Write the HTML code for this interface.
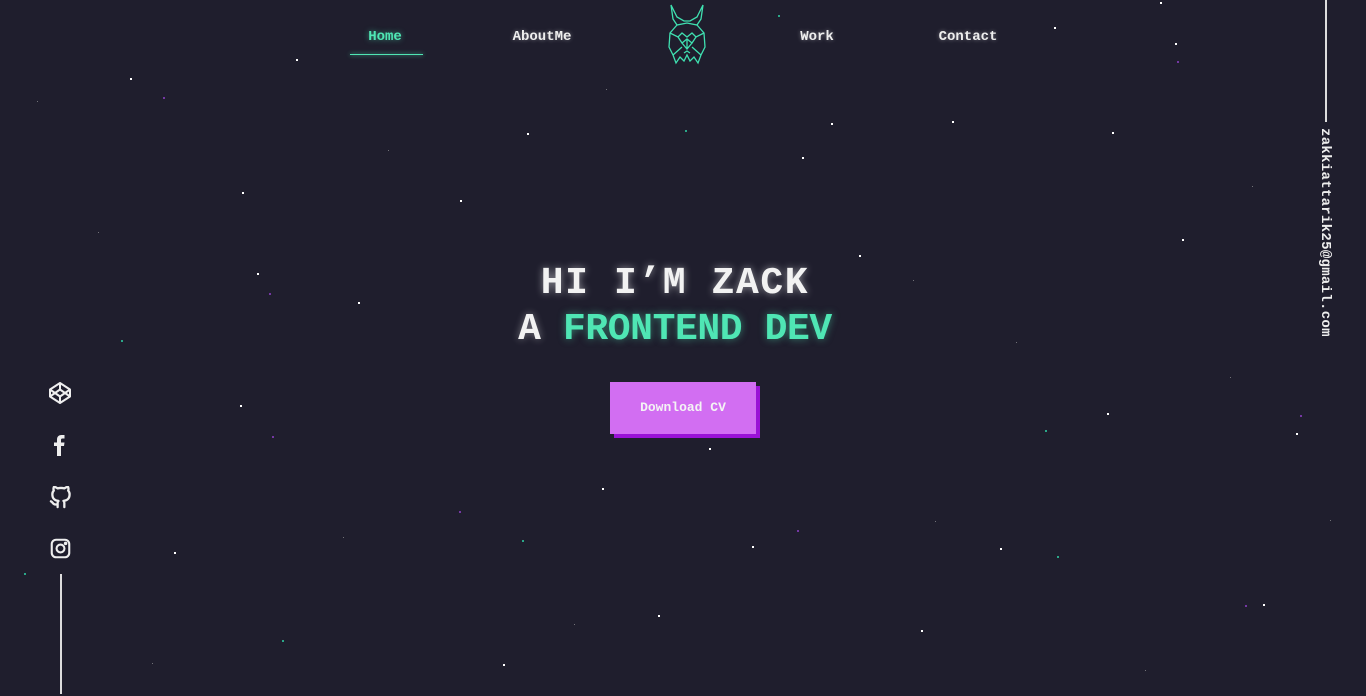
<!DOCTYPE html>
<html><head><meta charset="utf-8"><style>
html,body{margin:0;padding:0;width:1366px;height:696px;overflow:hidden;background:#1f1e2d;font-family:"Liberation Mono",monospace;}
.s{position:absolute;width:2px;height:2px;background:#fff;}
.p{position:absolute;width:2px;height:2px;background:#8a3fc0;opacity:.8}
.t{position:absolute;width:2px;height:2px;background:#2ec9a0;opacity:.8}
.d{position:absolute;width:1px;height:1px;background:#aaa;opacity:.6}
.nav{position:absolute;top:29px;font-size:14px;font-weight:bold;color:#eee;text-shadow:0 0 4px rgba(255,255,255,.4);transform:translateX(-50%);}
.h{position:absolute;left:-8px;width:1366px;text-align:center;font-weight:bold;}
</style></head><body>
<div class="nav" style="left:385px;color:#4fe6b4;text-shadow:0 0 6px rgba(79,230,180,.6)">Home</div>
<div style="position:absolute;left:350px;top:54px;width:73px;height:1px;background:#4fe6b4;box-shadow:0 0 4px #4fe6b4"></div>
<div class="nav" style="left:542px">AboutMe</div>
<div class="nav" style="left:817px">Work</div>
<div class="nav" style="left:968px">Contact</div>
<svg style="position:absolute;left:664px;top:3px" width="46" height="62" viewBox="0 0 46 62" fill="none" stroke="#3fe0b0" stroke-width="1.3">
<path d="M7 2 L9 16 L13 22 L23 20 L33 22 L37 16 L39 2 L33 14 L26 18 L20 18 L13 14 Z"/>
<path d="M13 22 L6 30 L5 44 L9 52 L12 60 L16 54 L20 58 L23 52 L26 58 L30 54 L34 60 L37 52 L41 44 L40 30 L33 22"/>
<path d="M6 30 L14 34 L18 30 L23 34 L28 30 L32 34 L40 30 M14 34 L18 40 L23 36 L28 40 L32 34 M18 40 L23 46 L28 40 M23 36 L23 46 M9 52 L18 44 M37 52 L28 44 M20 50 L23 48 L26 50"/>
</svg>
<div class="h" style="top:262px;font-size:38px;letter-spacing:1.6px;color:#f2f2f2;text-shadow:0 0 8px rgba(255,255,255,.5)">HI I’M ZACK</div>
<div class="h" style="top:308px;font-size:38px;letter-spacing:-0.4px;color:#f2f2f2;text-shadow:0 0 8px rgba(255,255,255,.4)">A <span style="color:#4fe6b4;text-shadow:0 0 8px rgba(79,230,180,.5)">FRONTEND DEV</span></div>
<div style="position:absolute;left:614px;top:386px;width:146px;height:52px;background:#9a12d6"></div>
<div style="position:absolute;left:610px;top:382px;width:146px;height:52px;background:#d26ef2;color:#f4f4f4;font-size:13px;font-weight:bold;line-height:52px;text-align:center">Download CV</div>
<div style="position:absolute;left:1325px;top:0;width:2px;height:122px;background:#ddd"></div>
<div style="position:absolute;left:1317px;top:128px;writing-mode:vertical-rl;font-size:14px;font-weight:bold;color:#eee;letter-spacing:.3px">zakkiattarik25@gmail.com</div>
<div style="position:absolute;left:60px;top:574px;width:2px;height:120px;background:#ddd"></div>
<svg style="position:absolute;left:48px;top:381px" width="24" height="24" viewBox="0 0 24 24" fill="none" stroke="#eee" stroke-width="2" stroke-linejoin="round"><path d="M12 2 L22 8.5 V15.5 L12 22 L2 15.5 V8.5 Z M12 22 V15.5 M22 8.5 L12 15.5 L2 8.5 M2 15.5 L12 8.5 L22 15.5 M12 2 V8.5"/></svg>
<svg style="position:absolute;left:52px;top:434px" width="16" height="22" viewBox="0 0 16 22" fill="#eee"><path d="M5 22 V12 H2 V8.5 H5 V5.5 C5 2.5 7 1 9.5 1 H12.5 V4.5 H10.5 C9.3 4.5 9 5 9 6 V8.5 H12.5 L12 12 H9 V22 Z"/></svg>
<svg style="position:absolute;left:49px;top:486px" width="23" height="23" viewBox="0 0 24 24" fill="none" stroke="#eee" stroke-width="2.4" stroke-linecap="round" stroke-linejoin="round"><path d="M9 19c-5 1.5-5-2.5-7-3m14 6v-3.9a3.4 3.4 0 0 0-.9-2.6c3.1-.3 6.4-1.5 6.4-7A5.4 5.4 0 0 0 20 4.8 5 5 0 0 0 19.9 1S18.7.7 16 2.5a13.4 13.4 0 0 0-7 0C6.3.7 5.1 1 5.1 1A5 5 0 0 0 5 4.8a5.4 5.4 0 0 0-1.5 3.8c0 5.4 3.3 6.6 6.4 7A3.4 3.4 0 0 0 9 18.1V22"/></svg>
<svg style="position:absolute;left:50px;top:538px" width="21" height="21" viewBox="0 0 24 24" fill="none" stroke="#eee" stroke-width="2.4"><rect x="2" y="2" width="20" height="20" rx="5"/><circle cx="12" cy="12" r="4.5"/><circle cx="17.8" cy="6.2" r=".8" fill="#eee"/></svg>
<div class="s" style="left:130px;top:78px"></div><div class="s" style="left:296px;top:59px"></div>
<div class="s" style="left:460px;top:200px"></div><div class="s" style="left:527px;top:133px"></div>
<div class="s" style="left:831px;top:123px"></div><div class="s" style="left:802px;top:157px"></div>
<div class="s" style="left:952px;top:121px"></div><div class="s" style="left:1112px;top:132px"></div>
<div class="s" style="left:1175px;top:43px"></div><div class="s" style="left:1182px;top:239px"></div>
<div class="s" style="left:859px;top:255px"></div><div class="s" style="left:257px;top:273px"></div>
<div class="s" style="left:358px;top:302px"></div><div class="s" style="left:240px;top:405px"></div>
<div class="s" style="left:709px;top:448px"></div><div class="s" style="left:602px;top:488px"></div>
<div class="s" style="left:174px;top:552px"></div><div class="s" style="left:752px;top:546px"></div>
<div class="s" style="left:658px;top:615px"></div><div class="s" style="left:503px;top:664px"></div>
<div class="s" style="left:921px;top:630px"></div><div class="s" style="left:1107px;top:413px"></div>
<div class="s" style="left:1296px;top:433px"></div><div class="s" style="left:1263px;top:604px"></div>
<div class="s" style="left:1160px;top:2px"></div><div class="s" style="left:1054px;top:27px"></div>
<div class="s" style="left:242px;top:192px"></div><div class="s" style="left:1000px;top:548px"></div>
<div class="p" style="left:163px;top:97px"></div><div class="p" style="left:272px;top:436px"></div>
<div class="p" style="left:459px;top:511px"></div><div class="p" style="left:797px;top:530px"></div>
<div class="p" style="left:1177px;top:61px"></div><div class="p" style="left:1300px;top:415px"></div>
<div class="p" style="left:269px;top:293px"></div><div class="p" style="left:1245px;top:605px"></div>
<div class="t" style="left:121px;top:340px"></div><div class="t" style="left:522px;top:540px"></div>
<div class="t" style="left:1045px;top:430px"></div><div class="t" style="left:1057px;top:556px"></div>
<div class="t" style="left:282px;top:640px"></div><div class="t" style="left:24px;top:573px"></div>
<div class="t" style="left:685px;top:130px"></div><div class="t" style="left:778px;top:15px"></div>
<div class="d" style="left:37px;top:101px"></div><div class="d" style="left:388px;top:150px"></div>
<div class="d" style="left:606px;top:89px"></div><div class="d" style="left:913px;top:280px"></div>
<div class="d" style="left:1016px;top:342px"></div><div class="d" style="left:1230px;top:377px"></div>
<div class="d" style="left:343px;top:537px"></div><div class="d" style="left:935px;top:521px"></div>
<div class="d" style="left:1330px;top:520px"></div><div class="d" style="left:152px;top:663px"></div>
<div class="d" style="left:574px;top:624px"></div><div class="d" style="left:1145px;top:670px"></div>
<div class="d" style="left:98px;top:232px"></div><div class="d" style="left:1252px;top:186px"></div>
</body></html>
